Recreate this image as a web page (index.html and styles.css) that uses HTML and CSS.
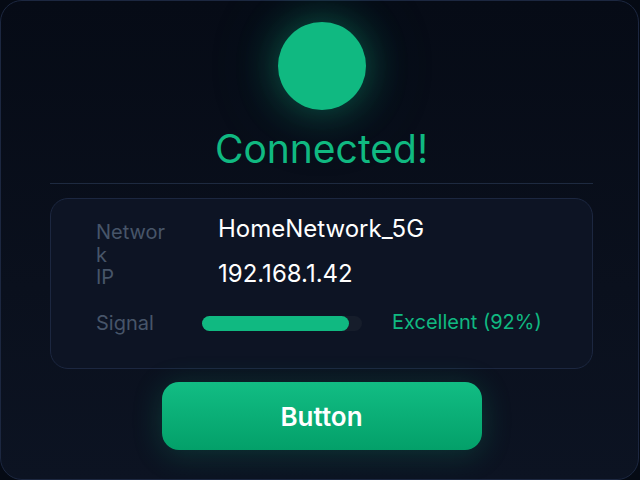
FILE: index.html
```html
<!DOCTYPE html>
<html>
<head>
<meta charset="utf-8">
<link rel="stylesheet" href="styles.css">
</head>
<body>
<div class="panel">
  <div class="status-dot"></div>
  <h1 class="title">Connected!</h1>
  <div class="divider"></div>
  <div class="info-card">
    <div class="info-grid">
      <div class="label">Network</div>
      <div class="value">HomeNetwork_5G</div>
      <div class="label">IP</div>
      <div class="value">192.168.1.42</div>
    </div>
    <div class="signal-row">
      <div class="label signal-label">Signal</div>
      <div class="track"><div class="fill" style="width: 92%"></div></div>
      <div class="signal-text">Excellent (92%)</div>
    </div>
  </div>
  <button class="action">Button</button>
</div>
</body>
</html>
```

FILE: styles.css
```css
html, body {
  margin: 0;
  padding: 0;
  background: #050a14;
}
body {
  width: 640px;
  height: 480px;
  overflow: hidden;
  font-family: Inter, "Noto Sans", sans-serif;
}
.panel {
  box-sizing: border-box;
  width: 639px;
  height: 480px;
  border: 1px solid #1c2740;
  border-radius: 22px;
  background: linear-gradient(180deg, #060b16 0%, #0a101d 60%, #0c1322 100%);
  padding: 21px 45px 0 49px;
  display: flex;
  flex-direction: column;
  align-items: center;
}
.status-dot {
  width: 88px;
  height: 88px;
  border-radius: 50%;
  background: #10b981;
  box-shadow: 0 0 40px rgba(16, 185, 129, 0.45), 0 0 90px rgba(16, 185, 129, 0.12);
  flex: none;
}
.title {
  margin: 16px 0 0;
  font-size: 39px;
  font-weight: 400;
  line-height: 46px;
  color: #10b981;
  letter-spacing: 0;
}
.divider {
  align-self: stretch;
  height: 1px;
  background: #1e2a40;
  margin-top: 11px;
}
.info-card {
  align-self: stretch;
  box-sizing: border-box;
  margin-top: 14px;
  height: 171px;
  border: 1px solid #1c2740;
  border-radius: 18px;
  background: #0d1424;
  padding: 15px 40px 0 45px;
}
.info-grid {
  display: grid;
  grid-template-columns: 70px 1fr;
  grid-template-rows: 45px 45px;
  column-gap: 52px;
}
.label {
  font-size: 20px;
  line-height: 23px;
  color: #475569;
  padding-top: 7px;
  overflow-wrap: anywhere;
}
.value {
  font-size: 24px;
  line-height: 29px;
  color: #ffffff;
}
.signal-row {
  display: flex;
  align-items: center;
  margin-top: 8px;
}
.signal-label {
  width: 106px;
  padding-top: 0;
  flex: none;
}
.track {
  width: 160px;
  height: 15px;
  border-radius: 8px;
  background: #161d2b;
  flex: none;
}
.fill {
  height: 100%;
  border-radius: 8px;
  background: #10b981;
}
.signal-text {
  margin-left: 30px;
  font-size: 20px;
  line-height: 23px;
  margin-top: -3px;
  color: #10b981;
}
.action {
  margin-top: 13px;
  width: 320px;
  height: 68px;
  border: none;
  border-radius: 17px;
  background: linear-gradient(180deg, #12bd84 0%, #03a069 100%);
  box-shadow: 0 4px 30px rgba(16, 185, 129, 0.22);
  color: #ffffff;
  font-family: Inter, "Noto Sans", sans-serif;
  font-size: 26px;
  font-weight: 600;
  flex: none;
}
```
